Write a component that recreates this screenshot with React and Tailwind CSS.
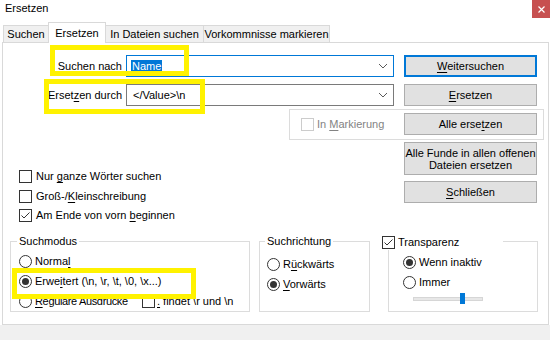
const U = ({ children }) => (
  <span className="underline decoration-1 underline-offset-[2px]">{children}</span>
);

function Check({ checked, disabled }) {
  return (
    <span
      className={`w-[13px] h-[13px] border ${
        disabled ? "border-[#cccccc]" : "border-[#333333]"
      } bg-white flex items-center justify-center shrink-0`}
    >
      {checked && (
        <svg width="11" height="11" viewBox="0 0 11 11">
          <path d="M1.5 5.5 L4 8 L9.5 2.5" stroke="#333333" fill="none" strokeWidth="1" />
        </svg>
      )}
    </span>
  );
}

function Radio({ checked }) {
  return (
    <span className="w-[13px] h-[13px] rounded-full border border-[#333333] bg-white flex items-center justify-center shrink-0">
      {checked && <span className="w-[7px] h-[7px] rounded-full bg-[#333333]" />}
    </span>
  );
}

function Chevron() {
  return (
    <svg width="10" height="6" viewBox="0 0 10 6" className="shrink-0">
      <path d="M1 1 L5 5 L9 1" stroke="#5a5a5a" fill="none" strokeWidth="1" />
    </svg>
  );
}

function Btn({ children, def, className = "" }) {
  return (
    <div
      className={`w-[133px] flex items-center justify-center text-center bg-[#e1e1e1] ${
        def ? "border-2 border-[#0078d7]" : "border border-[#adadad]"
      } ${className}`}
    >
      {children}
    </div>
  );
}

function Tab({ children, active, w, first }) {
  return (
    <div
      className={`${w} ${first ? "" : "-ml-px"} flex items-center justify-center border-l border-t border-r border-[#d9d9d9] ${
        active ? "h-[21px] bg-white relative z-10 -mb-px" : "h-[17px] bg-[#f0f0f0]"
      }`}
    >
      {children}
    </div>
  );
}

export default function App() {
  return (
    <div
      className="relative w-[550px] h-[340px] bg-white text-black text-[11px] leading-[13px] flex flex-col overflow-hidden"
      style={{ fontFamily: "'Liberation Sans', Arial, sans-serif" }}
    >
      {/* title bar */}
      <div className="h-[22px] flex items-start justify-between shrink-0">
        <div className="pl-[5px] pt-[2px]">Ersetzen</div>
        <div className="w-[18px] h-[18px] bg-[#c75050] flex items-center justify-center">
          <svg width="7" height="7" viewBox="0 0 7 7">
            <path d="M0.5 0.5 L6.5 6.5 M6.5 0.5 L0.5 6.5" stroke="white" strokeWidth="1.2" />
          </svg>
        </div>
      </div>

      {/* tabs */}
      <div className="h-[20px] flex items-end pl-[3px] shrink-0">
        <Tab w="w-[46px]" first>Suchen</Tab>
        <Tab w="w-[58px]" active>Ersetzen</Tab>
        <Tab w="w-[99px]">In Dateien suchen</Tab>
        <Tab w="w-[127px]">Vorkommnisse markieren</Tab>
      </div>

      {/* panel */}
      <div className="ml-[2px] w-[547px] h-[283px] border border-[#d9d9d9] bg-white shrink-0 flex flex-col pt-[12px]">
        {/* row 1 */}
        <div className="flex items-center h-[22px]">
          <div className="w-[119px] text-right">
            Suchen <U>n</U>ach
          </div>
          <div className="ml-[4px] w-[268px] h-[22px] border border-[#0078d7] flex items-center justify-between pl-[4px] pr-[5px]">
            <span className="bg-[#0078d7] text-white px-[1px]">Name</span>
            <Chevron />
          </div>
          <Btn def className="ml-[10px] h-[22px]">
            <span>
              <U>W</U>eitersuchen
            </span>
          </Btn>
        </div>

        {/* row 2 */}
        <div className="flex items-center h-[22px] mt-[7px]">
          <div className="w-[119px] text-right">
            Erset<U>z</U>en durch
          </div>
          <div className="ml-[4px] w-[268px] h-[22px] border border-[#7a7a7a] flex items-center justify-between pl-[6px] pr-[5px]">
            <span>{"</Value>\\n"}</span>
            <Chevron />
          </div>
          <Btn className="ml-[10px] h-[22px]">
            <span>
              <U>E</U>rsetzen
            </span>
          </Btn>
        </div>

        {/* lower section */}
        <div className="mt-[3px] h-[132px] flex justify-between">
          <div className="pl-[16px] pt-[61px] flex flex-col">
            <div className="flex items-center h-[13px] gap-[4px]">
              <Check />
              <span>
                Nur <U>g</U>anze Wörter suchen
              </span>
            </div>
            <div className="flex items-center h-[13px] gap-[4px] mt-[7px]">
              <Check />
              <span>
                Groß-/<U>K</U>leinschreibung
              </span>
            </div>
            <div className="flex items-center h-[13px] gap-[4px] mt-[6px]">
              <Check checked />
              <span>
                Am Ende von vorn <U>b</U>eginnen
              </span>
            </div>
          </div>

          <div className="w-[255px] mr-[4px] flex flex-col">
            <div className="h-[31px] border border-[#dcdcdc] flex items-start justify-between pt-[3px]">
              <div className="flex items-center gap-[3px] pl-[11px] h-[22px]">
                <Check disabled />
                <span className="text-[#838383]">
                  In <U>M</U>arkierung
                </span>
              </div>
              <Btn className="h-[22px] mr-[6px]">
                <span>
                  Alle erse<U>t</U>zen
                </span>
              </Btn>
            </div>
            <Btn className="h-[33px] mt-[2px] self-end mr-[7px]">
              <span className="whitespace-nowrap leading-[12px]">
                Alle Funde in allen offenen
                <br />
                Dateien ersetzen
              </span>
            </Btn>
            <Btn className="h-[22px] mt-[6px] self-end mr-[7px]">
              <span>
                <U>S</U>chließen
              </span>
            </Btn>
          </div>
        </div>

        {/* group boxes */}
        <div className="flex pl-[7px] h-[71px]">
          {/* Suchmodus */}
          <div className="relative w-[240px] h-[71px] border border-[#dcdcdc] pt-[9px] pl-[8px]">
            <div className="absolute left-[6px] top-[-7px] px-[2px] bg-white">Suchmodus</div>
            <div className="flex items-center h-[20px] gap-[3px]">
              <Radio />
              <span>
                Norma<U>l</U>
              </span>
            </div>
            <div className="flex items-center h-[20px] gap-[3px]">
              <Radio checked />
              <span>
                {"Erwe"}
                <U>i</U>
                {"tert (\\n, \\r, \\t, \\0, \\x...)"}
              </span>
            </div>
            <div className="flex items-center h-[20px]">
              <div className="w-[123px] flex items-center gap-[3px] overflow-hidden">
                <Radio />
                <span className="whitespace-nowrap tracking-[-0.35px]">
                  <U>R</U>eguläre Ausdrücke
                </span>
              </div>
              <Check />
              <span className="ml-[2px]">
                <U>.</U>
                {" findet \\r und \\n"}
              </span>
            </div>
          </div>

          {/* Suchrichtung */}
          <div className="relative ml-[9px] w-[111px] h-[71px] border border-[#dcdcdc] pt-[12px] pl-[7px]">
            <div className="absolute left-[5px] top-[-7px] px-[2px] bg-white">Suchrichtung</div>
            <div className="flex items-center h-[20px] gap-[3px]">
              <Radio />
              <span>
                R<U>ü</U>ckwärts
              </span>
            </div>
            <div className="flex items-center h-[20px] gap-[3px]">
              <Radio checked />
              <span>
                <U>V</U>orwärts
              </span>
            </div>
          </div>

          {/* Transparenz */}
          <div className="relative ml-[18px] w-[150px] h-[71px] border border-[#dcdcdc] pt-[10px] pl-[14px]">
            <div className="absolute left-[-7px] top-[-7px] w-[121px] h-[15px] bg-white flex items-center gap-[3px]">
              <Check checked />
              <span>Transparenz</span>
            </div>
            <div className="flex items-center h-[20px] gap-[3px]">
              <Radio checked />
              <span>Wenn inaktiv</span>
            </div>
            <div className="flex items-center h-[20px] gap-[3px]">
              <Radio />
              <span>Immer</span>
            </div>
            <div className="relative ml-[10px] mt-[1px] w-[70px] h-[11px] flex items-center">
              <div className="w-full h-[4px] bg-[#e7e7e7] border border-[#d6d6d6]" />
              <div className="absolute left-[47px] top-0 w-[5px] h-[11px] bg-[#0078d7]" />
            </div>
          </div>
        </div>
      </div>

      <div className="flex-1 bg-[#f0f0f0]" />

      {/* yellow annotation boxes */}
      <div className="absolute left-[50px] top-[45px] w-[139px] h-[31px] border-[5px] border-[#fff200]" />
      <div className="absolute left-[44px] top-[79px] w-[161px] h-[35px] border-[5px] border-[#fff200]" />
      <div className="absolute left-[12px] top-[268px] w-[184px] h-[31px] border-[5px] border-[#fff200]" />
    </div>
  );
}
